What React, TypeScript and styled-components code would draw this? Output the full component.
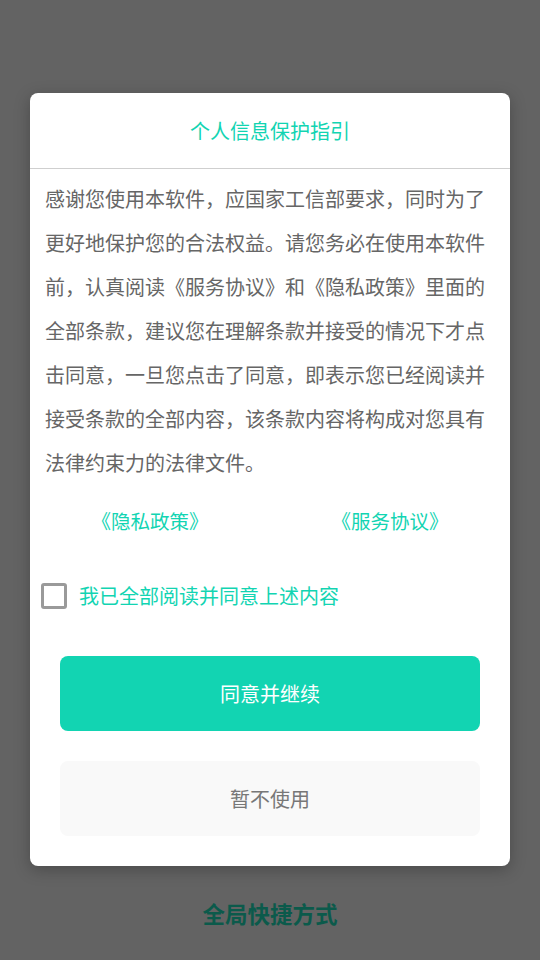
import React, { useState } from "react";
import styled, { createGlobalStyle } from "styled-components";

const GlobalStyle = createGlobalStyle`
  html, body {
    margin: 0;
    padding: 0;
    background: #636363;
  }
  body {
    font-family: "Noto Sans CJK SC", "Noto Sans", sans-serif;
  }
`;

const TEAL = "#12d4b2";

const Page = styled.div`
  width: 540px;
  height: 960px;
  display: flex;
  flex-direction: column;
  align-items: center;
  overflow: hidden;
`;

const Dialog = styled.div`
  margin-top: 93px;
  width: 480px;
  background: #fff;
  border-radius: 8px;
  box-shadow: 0 4px 16px rgba(0, 0, 0, 0.25);
  display: flex;
  flex-direction: column;
  padding-bottom: 30px;
`;

const Header = styled.div`
  height: 75px;
  display: flex;
  align-items: center;
  justify-content: center;
  border-bottom: 1px solid #cfcfcf;
  color: ${TEAL};
  font-size: 20px;
`;

const Body = styled.p`
  margin: 0;
  padding: 8px 15px 0;
  color: #666;
  font-size: 20px;
  line-height: 44px;
`;

const LinkRow = styled.div`
  margin-top: 23px;
  display: grid;
  grid-template-columns: 1fr 1fr;
`;

const DocLink = styled.a`
  text-align: center;
  color: ${TEAL};
  font-size: 19.5px;
  line-height: 26px;
  text-decoration: none;
  cursor: pointer;
`;

const AgreeRow = styled.label`
  margin-top: 49px;
  padding-left: 11px;
  display: flex;
  align-items: center;
  gap: 12px;
  cursor: pointer;
`;

const Box = styled.span<{ $checked: boolean }>`
  width: 26px;
  height: 26px;
  box-sizing: border-box;
  border: 3px solid ${(p) => (p.$checked ? TEAL : "#9a9a9a")};
  background: ${(p) => (p.$checked ? TEAL : "#fff")};
  border-radius: 3px;
  display: flex;
  align-items: center;
  justify-content: center;
`;

const AgreeText = styled.span`
  color: ${TEAL};
  font-size: 20px;
  line-height: 26px;
`;

const Button = styled.button<{ $primary?: boolean }>`
  margin: ${(p) => (p.$primary ? "47px 30px 0" : "30px 30px 0")};
  height: 75px;
  border: none;
  border-radius: 8px;
  font-family: inherit;
  font-size: 20px;
  background: ${(p) => (p.$primary ? TEAL : "#f9f9f9")};
  color: ${(p) => (p.$primary ? "#fff" : "#777")};
  cursor: pointer;
`;

const Footer = styled.div`
  margin-top: 31px;
  color: #0b5a4b;
  font-size: 22.5px;
  font-weight: bold;
  line-height: 32px;
`;

export default function App() {
  const [checked, setChecked] = useState(false);
  return (
    <>
      <GlobalStyle />
      <Page>
        <Dialog>
          <Header>个人信息保护指引</Header>
          <Body>
            感谢您使用本软件，应国家工信部要求，同时为了更好地保护您的合法权益。请您务必在使用本软件前，认真阅读《服务协议》和《隐私政策》里面的全部条款，建议您在理解条款并接受的情况下才点击同意，一旦您点击了同意，即表示您已经阅读并接受条款的全部内容，该条款内容将构成对您具有法律约束力的法律文件。
          </Body>
          <LinkRow>
            <DocLink>《隐私政策》</DocLink>
            <DocLink>《服务协议》</DocLink>
          </LinkRow>
          <AgreeRow onClick={() => setChecked(!checked)}>
            <Box $checked={checked}>
              {checked && (
                <svg width="16" height="16" viewBox="0 0 16 16">
                  <path d="M3 8l3.5 3.5L13 5" fill="none" stroke="#fff" strokeWidth="2.5" />
                </svg>
              )}
            </Box>
            <AgreeText>我已全部阅读并同意上述内容</AgreeText>
          </AgreeRow>
          <Button $primary>同意并继续</Button>
          <Button>暂不使用</Button>
        </Dialog>
        <Footer>全局快捷方式</Footer>
      </Page>
    </>
  );
}
